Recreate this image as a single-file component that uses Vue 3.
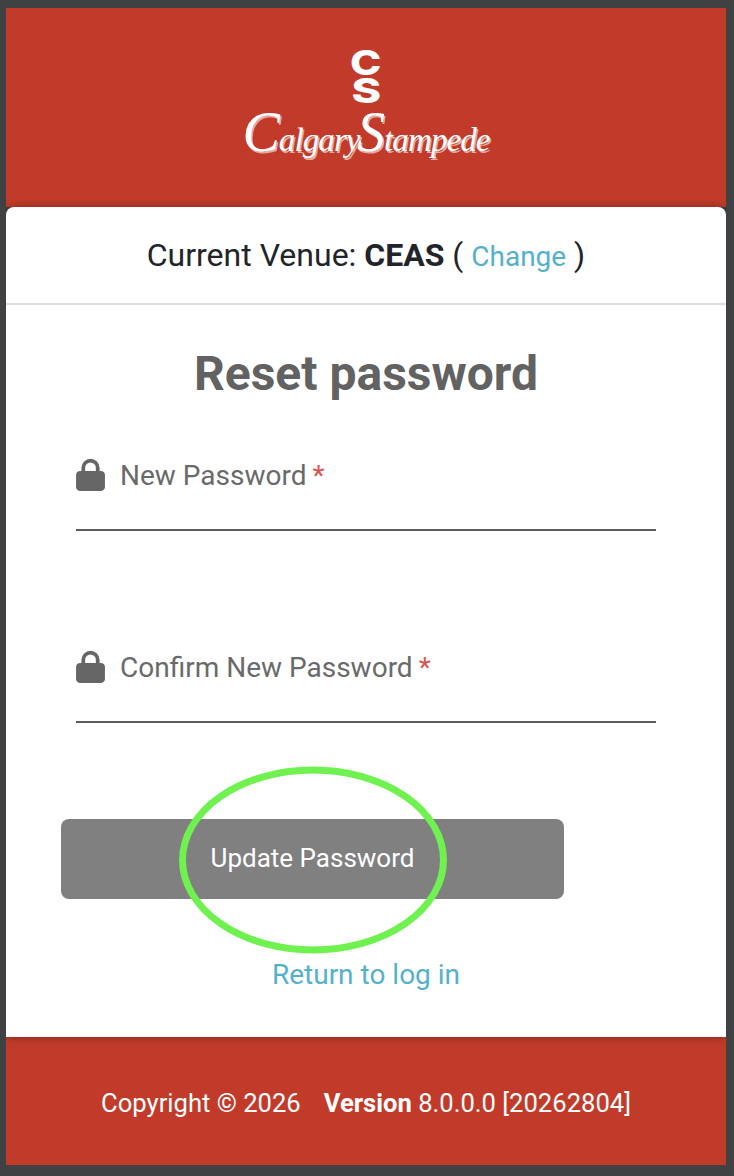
<script setup>
const fields = [
  { id: 'new', label: 'New Password' },
  { id: 'confirm', label: 'Confirm New Password' }
]
</script>

<template>
  <div class="page">
    <main class="panel">
      <header class="brand">
        <div class="mark">
          <span class="mark-c">C</span>
          <span class="mark-s">S</span>
        </div>
        <div class="script"><span class="cap">C</span>algary <span class="cap">S</span>tampede</div>
      </header>

      <section class="card">
        <div class="venue">
          Current Venue: <strong>CEAS</strong> ( <a class="link change">Change</a> )
        </div>
        <h1 class="title">Reset password</h1>
        <form class="form" @submit.prevent>
          <div v-for="f in fields" :key="f.id" class="field">
            <svg class="lock" viewBox="0 0 28 32" aria-hidden="true">
              <path d="M7 14V9.500a7 7 0 0 1 14 0V14" fill="none" stroke="#666" stroke-width="3.6" />
              <rect x="0" y="12.500" width="28" height="19.500" rx="4" fill="#666" />
            </svg>
            <label class="label">{{ f.label }}<span class="req">*</span></label>
          </div>
        </form>
        <div class="actions">
          <button class="submit" type="button"><span class="submit-text">Update Password</span></button>
          <svg class="ring" viewBox="0 0 268 188" aria-hidden="true">
            <ellipse cx="134" cy="94" rx="130.500" ry="90" fill="none" stroke="#6ff14f" stroke-width="7" />
          </svg>
        </div>
        <a class="link back">Return to log in</a>
      </section>

      <footer class="foot">
        <span>Copyright © 2026</span>
        <span><strong>Version</strong> 8.0.0.0 [20262804]</span>
      </footer>
    </main>
  </div>
</template>

<style>
html, body { margin: 0; background: #404143; }
</style>

<style scoped>
.page {
  box-sizing: border-box;
  width: 734px;
  height: 1176px;
  padding: 8px 8px 11px 6px;
  background: #404143;
  font-family: Roboto, "Liberation Sans", sans-serif;
}
.panel {
  height: 1157px;
  display: flex;
  flex-direction: column;
  overflow: hidden;
}
.brand {
  height: 199px;
  background: #c23b2a;
  color: #fff;
  display: flex;
  flex-direction: column;
  align-items: center;
}
.mark {
  margin-top: 41px;
  height: 56px;
  width: 40px;
  display: flex;
  flex-direction: column;
  align-items: center;
  font-family: Inter, "Liberation Sans", sans-serif;
  font-weight: 800;
  font-size: 34px;
  line-height: 28px;
}
.mark-c {
  transform: scaleX(1.24);
}
.mark-s {
  transform: scaleX(1.32);
}
.script {
  margin-top: 5px;
  font-family: "Liberation Serif", serif;
  font-style: italic;
  font-size: 33px;
  line-height: 60px;
  letter-spacing: -0.9px;
  word-spacing: -10px;
  white-space: nowrap;
  text-shadow: 1.5px 1.5px 0 #e9a99f;
}
.cap {
  font-size: 56px;
  line-height: 40px;
}
.card {
  flex: 1;
  position: relative;
  z-index: 1;
  background: #fff;
  border-radius: 8px 8px 0 0;
  box-shadow: 0 0 10px rgba(0, 0, 0, 0.35);
  display: flex;
  flex-direction: column;
}
.venue {
  height: 98px;
  box-sizing: border-box;
  border-bottom: 2px solid #dedede;
  text-align: center;
  font-size: 32px;
  line-height: 96px;
  color: #212529;
}
.venue strong { font-weight: 700; }
.link { color: #55b1cb; }
.change { font-size: 28px; }
.title {
  margin: 41px 0 0;
  text-align: center;
  font-size: 48px;
  line-height: 56px;
  font-weight: 700;
  color: #626262;
}
.form {
  margin: 47px 70px 0;
  display: flex;
  flex-direction: column;
  gap: 110px;
}
.field {
  height: 82px;
  box-sizing: border-box;
  border-bottom: 2px solid #5c5c5c;
  display: flex;
  align-items: flex-start;
  gap: 15px;
}
.lock {
  width: 29px;
  height: 33px;
  margin-top: 9px;
  flex: none;
}
.label {
  font-size: 28px;
  line-height: 54px;
  color: #6a6a6a;
}
.req {
  color: #d9534f;
  margin-left: 6px;
}
.actions {
  position: relative;
  margin: 96px 0 0 55px;
  width: 503px;
}
.submit {
  display: block;
  width: 100%;
  height: 80px;
  padding: 0 0 2px;
  border: 0;
  border-radius: 8px;
  background: #808080;
  color: #fff;
  font-family: inherit;
  font-size: 26px;
  font-weight: 400;
}
.ring {
  position: absolute;
  left: 118px;
  top: -53px;
  width: 268px;
  height: 188px;
}
.back {
  margin-top: 56px;
  text-align: center;
  font-size: 28px;
  line-height: 40px;
}
.foot {
  height: 128px;
  box-sizing: border-box;
  padding-top: 4px;
  background: #c23b2a;
  color: #fff;
  display: flex;
  justify-content: center;
  align-items: center;
  gap: 23px;
  font-size: 25.6px;
}
.foot strong { font-weight: 700; }
</style>
